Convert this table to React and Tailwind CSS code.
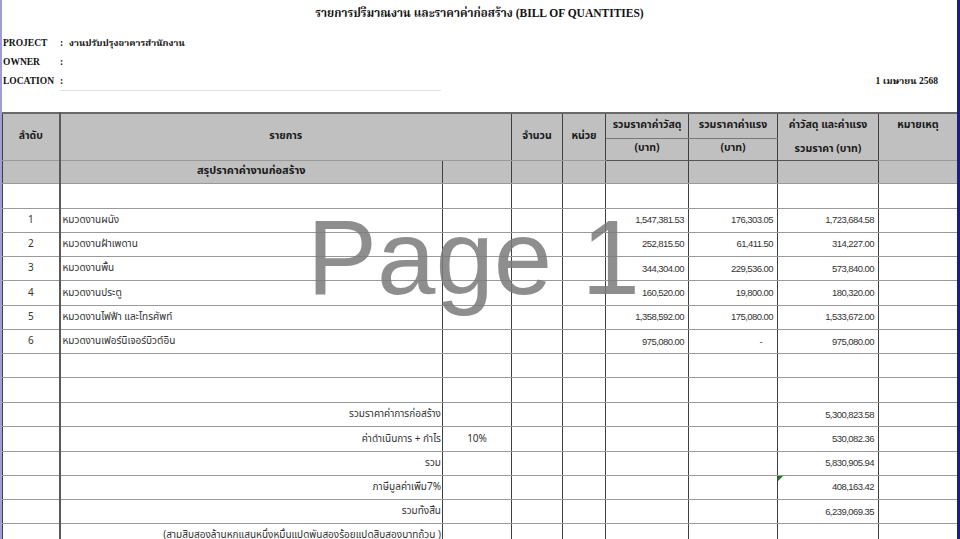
const thai = "font-['Tahoma','Noto_Sans_Thai','Liberation_Sans',sans-serif]"
const serif = "font-['Liberation_Serif','Noto_Serif_Thai','Noto_Sans_Thai',serif]"

const items = [
  ['1', 'หมวดงานผนัง', '1,547,381.53', '176,303.05', '1,723,684.58'],
  ['2', 'หมวดงานฝ้าเพดาน', '252,815.50', '61,411.50', '314,227.00'],
  ['3', 'หมวดงานพื้น', '344,304.00', '229,536.00', '573,840.00'],
  ['4', 'หมวดงานประตู', '160,520.00', '19,800.00', '180,320.00'],
  ['5', 'หมวดงานไฟฟ้า และโทรศัพท์', '1,358,592.00', '175,080.00', '1,533,672.00'],
  ['6', 'หมวดงานเฟอร์นิเจอร์บิวต์อิน', '975,080.00', '-', '975,080.00'],
]

const totals = [
  { label: 'รวมราคาค่าการก่อสร้าง', pct: '', value: '5,300,823.58' },
  { label: 'ค่าดำเนินการ + กำไร', pct: '10%', value: '530,082.36' },
  { label: 'รวม', pct: '', value: '5,830,905.94' },
  { label: 'ภาษีมูลค่าเพิ่ม7%', pct: '', value: '408,163.42', flag: true },
  { label: 'รวมทั้งสิ้น', pct: '', value: '6,239,069.35' },
  { label: '(สามสิบสองล้านหกแสนหนึ่งหมื่นแปดพันสองร้อยแปดสิบสองบาทถ้วน )', pct: '', value: '' },
]

const cell = 'border border-[#9a9a9a] border-x-[#3f3f3f] p-0'
const num = `${cell} text-right pr-[4px] text-[9.5px] tracking-[-0.55px] text-[#333] font-['Liberation_Sans',sans-serif]`

function Cell({ className = '', children }) {
  return <td className={`${cell} ${className}`}>{children}</td>
}

function Blank({ h = 'h-[24px]' }) {
  return (
    <tr className={h}>
      <Cell className="border-r-2 border-r-[#5a5a5a]" />
      <Cell />
      <Cell />
      <Cell />
      <Cell />
      <Cell />
      <Cell />
      <Cell />
      <Cell />
    </tr>
  )
}

export default function App() {
  return (
    <div className="relative w-[960px] h-[539px] overflow-hidden bg-white border-l-2 border-l-[#a0a0d0] border-r-[3px] border-r-[#1c1c8c]">
      <div className={`h-[28px] flex items-center justify-center text-[11.5px] font-bold text-[#111] ${serif}`}>
        รายการปริมาณงาน และราคาค่าก่อสร้าง (BILL OF QUANTITIES)
      </div>

      <div className={`mt-[6px] text-[9.5px] font-bold text-[#111] ${serif}`}>
        <div className="h-[19px] flex items-center">
          <span className="w-[58px] pl-[1px]">PROJECT</span>
          <span className="w-[9px]">:</span>
          <span>งานปรับปรุงอาคารสำนักงาน</span>
        </div>
        <div className="h-[19px] flex items-center">
          <span className="w-[58px] pl-[1px]">OWNER</span>
          <span className="w-[9px]">:</span>
        </div>
        <div className="h-[19px] flex items-center">
          <span className="w-[58px] pl-[1px]">LOCATION</span>
          <span className="w-[381px] h-full flex items-center border-b border-[#e2e2e2]">:</span>
          <span className="ml-auto pr-[19px]">1 เมษายน 2568</span>
        </div>
      </div>

      <table className={`mt-[21px] w-[955px] table-fixed border-collapse text-[10px] text-[#222] ${thai}`}>
        <colgroup>
          <col className="w-[57px]" />
          <col className="w-[383px]" />
          <col className="w-[69px]" />
          <col className="w-[51px]" />
          <col className="w-[43px]" />
          <col className="w-[83px]" />
          <col className="w-[89px]" />
          <col className="w-[101px]" />
          <col className="w-[79px]" />
        </colgroup>
        <thead className="bg-[#c0c0c0] font-bold text-[10.5px] text-[#1a1a1a]">
          <tr className="h-[25px] border-t-2 border-t-[#6a6a6a]">
            <th rowSpan={2} className={`${cell} border-r-2 border-r-[#5a5a5a] font-bold`}>ลำดับ</th>
            <th rowSpan={2} colSpan={2} className={`${cell} font-bold`}>รายการ</th>
            <th rowSpan={2} className={`${cell} font-bold`}>จำนวน</th>
            <th rowSpan={2} className={`${cell} font-bold`}>หน่วย</th>
            <th className={`${cell} font-bold border-b-[#777]`}>รวมราคาค่าวัสดุ</th>
            <th className={`${cell} font-bold border-b-[#777]`}>รวมราคาค่าแรง</th>
            <th className={`${cell} font-bold border-b-0`}>ค่าวัสดุ และค่าแรง</th>
            <th rowSpan={2} className={`${cell} font-bold align-top pt-[4px]`}>หมายเหตุ</th>
          </tr>
          <tr className="h-[22px]">
            <th className={`${cell} font-bold border-b-[#555]`}>(บาท)</th>
            <th className={`${cell} font-bold border-b-[#555]`}>(บาท)</th>
            <th className={`${cell} font-bold border-t-0 border-b-[#555] align-bottom pb-[2px]`}>รวมราคา (บาท)</th>
          </tr>
          <tr className="h-[23px]">
            <th className={`${cell} border-r-2 border-r-[#5a5a5a]`} />
            <th className={`${cell} font-bold text-[11px]`}>สรุปราคาค่างานก่อสร้าง</th>
            <th className={cell} />
            <th className={cell} />
            <th className={cell} />
            <th className={cell} />
            <th className={cell} />
            <th className={cell} />
            <th className={cell} />
          </tr>
        </thead>
        <tbody>
          <Blank h="h-[25px]" />
          {items.map(([no, name, mat, lab, sum]) => (
            <tr key={no} className="h-[24.3px]">
              <Cell className="border-r-2 border-r-[#5a5a5a] text-center text-[#333]">{no}</Cell>
              <Cell className="pl-[2px] text-[#333]">{name}</Cell>
              <Cell />
              <Cell />
              <Cell />
              <td className={num}>{mat}</td>
              <td className={`${num} ${lab === '-' ? 'pr-[15px]' : ''}`}>{lab}</td>
              <td className={num}>{sum}</td>
              <Cell />
            </tr>
          ))}
          <Blank />
          <Blank h="h-[25px]" />
          {totals.map((t) => (
            <tr key={t.label} className="h-[24.2px]">
              <Cell className="border-r-2 border-r-[#5a5a5a]" />
              <Cell className="text-right pr-[1px] text-[#333] whitespace-nowrap">{t.label}</Cell>
              <Cell className="text-center text-[#333]">{t.pct}</Cell>
              <Cell />
              <Cell />
              <Cell />
              <Cell />
              <td className={`${num} relative`}>
                {t.flag && (
                  <span className="absolute left-0 top-0 w-0 h-0 border-t-[5px] border-t-[#1f7a1f] border-r-[5px] border-r-transparent" />
                )}
                {t.value}
              </td>
              <Cell />
            </tr>
          ))}
        </tbody>
      </table>

      <div className="pointer-events-none absolute left-[305px] top-[205px] text-[105px] leading-none text-[#7a7a7a]/85 font-['Liberation_Sans',sans-serif] whitespace-nowrap">
        Page 1
      </div>
    </div>
  )
}
